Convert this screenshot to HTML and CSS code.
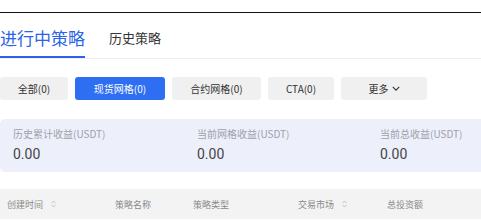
FILE: index.html
```html
<!DOCTYPE html>
<html lang="zh">
<head>
<meta charset="utf-8">
<link rel="stylesheet" href="styles.css">
</head>
<body>
<div class="page">
  <div class="topbar"></div>
  <div class="tabs">
    <div class="tab active">进行中策略</div>
    <div class="tab">历史策略</div>
  </div>
  <div class="filters">
    <button class="chip w68">全部(0)</button>
    <button class="chip chip-on w90">现货网格(0)</button>
    <button class="chip w89">合约网格(0)</button>
    <button class="chip w66">CTA(0)</button>
    <button class="chip w86">更多<svg class="chev" viewBox="0 0 10 6" width="8" height="5"><path d="M1 1 L5 5 L9 1" fill="none" stroke="#333" stroke-width="1.4"/></svg></button>
  </div>
  <div class="summary">
    <div class="stat">
      <div class="stat-label">历史累计收益(USDT)</div>
      <div class="stat-value">0.00</div>
    </div>
    <div class="stat">
      <div class="stat-label">当前网格收益(USDT)</div>
      <div class="stat-value">0.00</div>
    </div>
    <div class="stat">
      <div class="stat-label">当前总收益(USDT)</div>
      <div class="stat-value">0.00</div>
    </div>
  </div>
  <div class="thead">
    <div class="th c1">创建时间<svg class="sort" viewBox="0 0 6 10" width="5" height="8"><path d="M0.5 4 L3 1.2 L5.5 4 M0.5 6 L3 8.8 L5.5 6" fill="none" stroke="#bbb" stroke-width="1"/></svg></div>
    <div class="th c2">策略名称</div>
    <div class="th c3">策略类型</div>
    <div class="th c4">交易市场<svg class="sort" viewBox="0 0 6 10" width="5" height="8"><path d="M0.5 4 L3 1.2 L5.5 4 M0.5 6 L3 8.8 L5.5 6" fill="none" stroke="#bbb" stroke-width="1"/></svg></div>
    <div class="th c5">总投资额</div>
  </div>
</div>
</body>
</html>
```
FILE: styles.css
```css
html, body {
  margin: 0;
  padding: 0;
  background: #fff;
}
body {
  font-family: "Noto Sans CJK SC", "Noto Sans", sans-serif;
  color: #333;
}
.page {
  width: 481px;
  overflow: hidden;
}
.topbar {
  height: 12px;
  border-bottom: 1px solid #111;
}
.tabs {
  display: flex;
  align-items: flex-end;
  gap: 24px;
  border-bottom: 1px solid #f0f0f0;
}
.tab {
  font-size: 13px;
  line-height: 20px;
  color: #333;
  padding-bottom: 10px;
}
.tab.active {
  font-size: 17px;
  line-height: 24px;
  color: #2a63e8;
  padding-top: 13px;
  padding-bottom: 6px;
  border-bottom: 2px solid #2a63e8;
}
.filters {
  display: flex;
  gap: 7px;
  margin-top: 18px;
}
.chip {
  height: 23px;
  border: none;
  border-radius: 3px;
  background: #f0f0f0;
  color: #333;
  font-family: inherit;
  font-size: 10px;
  padding: 0;
  display: flex;
  align-items: center;
  justify-content: center;
  gap: 3px;
}
.chip-on {
  background: #2e6ef2;
  color: #fff;
}
.w68 { width: 68px; }
.w90 { width: 90px; }
.w89 { width: 89px; }
.w66 { width: 66px; }
.w86 { width: 86px; }
.chev { display: block; }
.summary {
  margin-top: 19px;
  margin-right: -12px;
  background: #edf0fb;
  border-radius: 5px;
  display: grid;
  grid-template-columns: 184px 183px 1fr;
  padding: 8px 13px 9px;
}
.stat-label {
  font-size: 10px;
  line-height: 14px;
  color: #a0a0a8;
  white-space: nowrap;
}
.stat-value {
  font-family: "Roboto", sans-serif;
  font-size: 14px;
  line-height: 18px;
  color: #444;
  margin-top: 4px;
}
.thead {
  margin-top: 17px;
  height: 30px;
  background: #f3f3f3;
  display: grid;
  grid-template-columns: 108px 78px 105px 89px 1fr;
  align-items: center;
}
.th {
  font-size: 9px;
  color: #8a8a8a;
  padding-left: 7px;
  display: flex;
  align-items: center;
  gap: 8px;
}
.sort { display: block; }
```
